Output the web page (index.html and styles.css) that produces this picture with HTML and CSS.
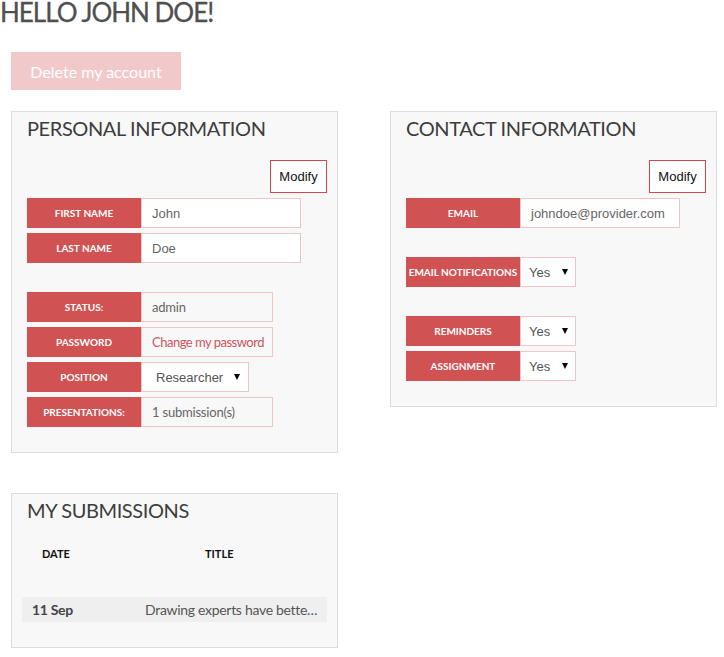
FILE: index.html
```html
<!DOCTYPE html>
<html>
<head>
<meta charset="utf-8">
<link rel="stylesheet" href="styles.css">
</head>
<body>
<h1 class="greeting">HELLO JOHN DOE!</h1>
<div class="actions">
  <button class="btn-delete">Delete my account</button>
</div>
<div class="panels">
  <section class="panel">
    <h2 class="panel-title">PERSONAL INFORMATION</h2>
    <div class="modify-row"><button class="btn-modify">Modify</button></div>
    <div class="group">
      <div class="field"><div class="label">First name</div><div class="value value-input w160">John</div></div>
      <div class="field"><div class="label">Last name</div><div class="value value-input w160">Doe</div></div>
    </div>
    <div class="group">
      <div class="field"><div class="label">Status:</div><div class="value w132">admin</div></div>
      <div class="field"><div class="label">Password</div><div class="value w132 link">Change my password</div></div>
      <div class="field"><div class="label">Position</div><div class="select w108 pad-wide"><span>Researcher</span><span class="caret"></span></div></div>
      <div class="field"><div class="label">Presentations:</div><div class="value w132">1 submission(s)</div></div>
    </div>
  </section>
  <section class="panel">
    <h2 class="panel-title">CONTACT INFORMATION</h2>
    <div class="modify-row"><button class="btn-modify">Modify</button></div>
    <div class="group">
      <div class="field"><div class="label">Email</div><div class="value value-input w160">johndoe@provider.com</div></div>
    </div>
    <div class="group">
      <div class="field"><div class="label">Email notifications</div><div class="select w56"><span>Yes</span><span class="caret"></span></div></div>
    </div>
    <div class="group">
      <div class="field"><div class="label">Reminders</div><div class="select w56"><span>Yes</span><span class="caret"></span></div></div>
      <div class="field"><div class="label">Assignment</div><div class="select w56"><span>Yes</span><span class="caret"></span></div></div>
    </div>
  </section>
</div>
<section class="panel panel-subs">
  <h2 class="panel-title">MY SUBMISSIONS</h2>
  <table class="subs">
    <colgroup><col class="c-date"><col class="c-title"></colgroup>
    <thead>
      <tr><th class="th-date">DATE</th><th class="th-title">TITLE</th></tr>
    </thead>
    <tbody>
      <tr><td class="td-date">11 Sep</td><td class="td-title">Drawing experts have bette…</td></tr>
    </tbody>
  </table>
</section>
</body>
</html>
```

FILE: styles.css
```css
html, body {
  margin: 0;
  padding: 0;
  background: #fff;
  font-family: Lato, "Liberation Sans", sans-serif;
}

.greeting {
  margin: 0;
  font-size: 26px;
  line-height: 24px;
  font-weight: 400;
  color: #4f4f4f;
  letter-spacing: -1px;
  -webkit-text-stroke: 0.3px #4f4f4f;
}

.actions {
  padding: 28px 0 0 11px;
}

.btn-delete {
  display: block;
  width: 170px;
  height: 38px;
  border: 0;
  padding: 0;
  background: #f1c9ca;
  color: #fff;
  font-family: Lato, sans-serif;
  font-size: 16px;
}

.panels {
  display: grid;
  grid-template-columns: 327px 327px;
  column-gap: 52px;
  align-items: start;
  margin: 21px 0 0 11px;
}

.panel {
  box-sizing: border-box;
  width: 327px;
  border: 1px solid #ddd;
  background: #f8f8f8;
  padding: 4px 10px 25px 15px;
}

.panel-title {
  margin: 0;
  font-size: 20px;
  line-height: 24px;
  font-weight: 400;
  color: #3d3d3d;
  letter-spacing: -0.4px;
}

.modify-row {
  display: flex;
  justify-content: flex-end;
  margin-top: 20px;
}

.btn-modify {
  width: 57px;
  height: 33px;
  padding: 0;
  border: 1px solid #d2474d;
  background: #fff;
  color: #111;
  font-family: "Liberation Sans", Arial, sans-serif;
  font-size: 13px;
}

.group {
  display: flex;
  flex-direction: column;
  gap: 5px;
  margin-top: 5px;
}

.group + .group {
  margin-top: 29px;
}

.field {
  display: flex;
  height: 30px;
}

.label {
  box-sizing: border-box;
  width: 114px;
  flex: none;
  background: #d05253;
  color: #fff;
  font-size: 10px;
  font-weight: 700;
  text-transform: uppercase;
  display: flex;
  align-items: center;
  justify-content: center;
  white-space: nowrap;
}

.value {
  box-sizing: border-box;
  border: 1px solid #f1c4c5;
  background: #f8f8f8;
  padding: 0 10px;
  display: flex;
  align-items: center;
  font-size: 13px;
  color: #666;
  white-space: nowrap;
  letter-spacing: -0.2px;
}

.value-input {
  background: #fff;
  font-family: "Liberation Sans", Arial, sans-serif;
  color: #666;
  letter-spacing: 0;
}

.link {
  color: #cc5560;
  letter-spacing: -0.5px;
}

.w160 { width: 160px; }
.w132 { width: 132px; }
.w108 { width: 108px; }
.w56 { width: 56px; }

.select {
  box-sizing: border-box;
  border: 1px solid #f1c4c5;
  background: #fff;
  display: flex;
  align-items: center;
  justify-content: space-between;
  padding: 0 7px 0 8px;
  font-family: "Liberation Sans", Arial, sans-serif;
  font-size: 13px;
  color: #555;
}

.pad-wide {
  padding-left: 14px;
  padding-right: 8px;
}

.caret {
  width: 0;
  height: 0;
  border-left: 3px solid transparent;
  border-right: 3px solid transparent;
  border-top: 6px solid #000;
}

.panel-subs {
  margin: 40px 0 0 11px;
}

.subs {
  border-collapse: collapse;
  table-layout: fixed;
  width: 305px;
  margin-left: -5px;
}

.c-date { width: 113px; }
.c-title { width: 192px; }

.subs th {
  padding: 22px 0 33px;
  line-height: 20px;
  font-size: 11px;
  font-weight: 700;
  color: #111;
  text-align: left;
}

.th-date { padding-left: 20px !important; }
.th-title { padding-left: 70px !important; }

.subs td {
  background: #efefef;
  line-height: 25px;
  font-size: 14px;
  padding: 0 0 0 10px;
  white-space: nowrap;
  overflow: hidden;
  text-overflow: ellipsis;
  letter-spacing: -0.3px;
}

.td-date {
  font-weight: 700;
  color: #444;
}

.td-title {
  color: #555;
}
```
